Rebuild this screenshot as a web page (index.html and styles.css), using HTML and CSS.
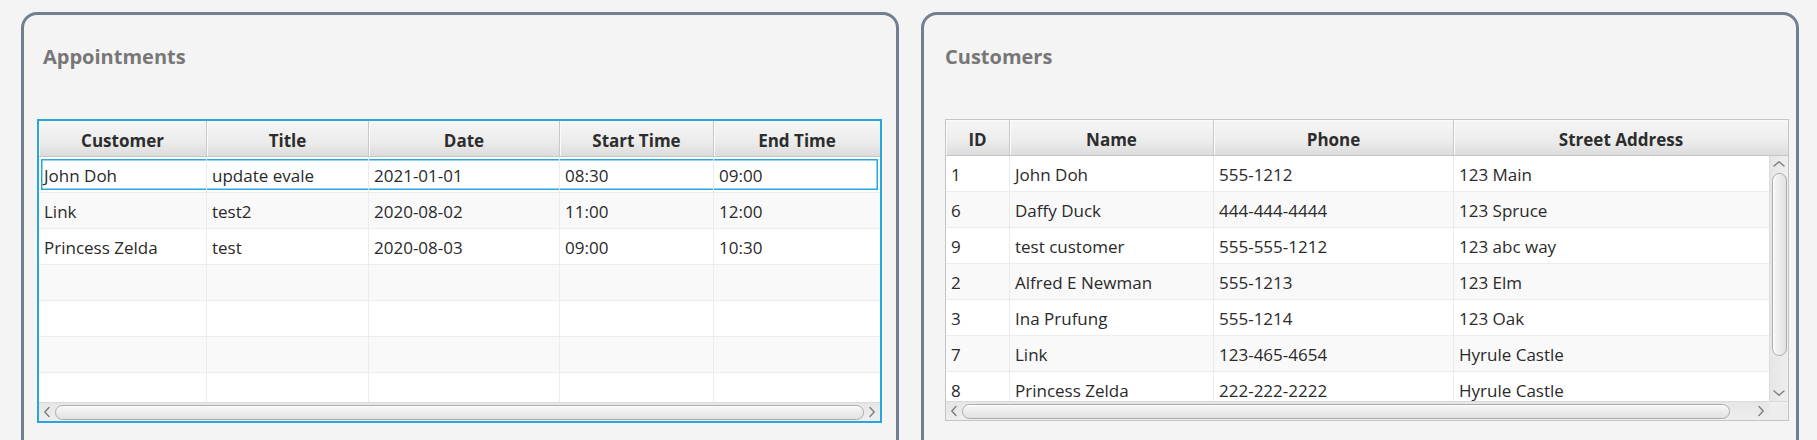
FILE: index.html
```html
<!DOCTYPE html>
<html>
<head>
<meta charset="utf-8">
<link rel="stylesheet" href="styles.css">
</head>
<body>
<div class="screen">
  <section class="panel panel-appts">
    <h2 class="panel-title">Appointments</h2>
    <div class="table table-focused">
      <div class="thead">
        <div class="th w168">Customer</div>
        <div class="th w162">Title</div>
        <div class="th w191">Date</div>
        <div class="th w154">Start Time</div>
        <div class="th grow last">End Time</div>
      </div>
      <div class="tbody-wrap">
        <div class="tbody">
          <div class="tr focus">
            <div class="td w168">John Doh</div>
            <div class="td w162">update evale</div>
            <div class="td w191">2021-01-01</div>
            <div class="td w154">08:30</div>
            <div class="td grow last">09:00</div>
          </div>
          <div class="tr">
            <div class="td w168">Link</div>
            <div class="td w162">test2</div>
            <div class="td w191">2020-08-02</div>
            <div class="td w154">11:00</div>
            <div class="td grow last">12:00</div>
          </div>
          <div class="tr">
            <div class="td w168">Princess Zelda</div>
            <div class="td w162">test</div>
            <div class="td w191">2020-08-03</div>
            <div class="td w154">09:00</div>
            <div class="td grow last">10:30</div>
          </div>
          <div class="tr">
            <div class="td w168"></div><div class="td w162"></div><div class="td w191"></div><div class="td w154"></div><div class="td grow last"></div>
          </div>
          <div class="tr">
            <div class="td w168"></div><div class="td w162"></div><div class="td w191"></div><div class="td w154"></div><div class="td grow last"></div>
          </div>
          <div class="tr">
            <div class="td w168"></div><div class="td w162"></div><div class="td w191"></div><div class="td w154"></div><div class="td grow last"></div>
          </div>
          <div class="tr">
            <div class="td w168"></div><div class="td w162"></div><div class="td w191"></div><div class="td w154"></div><div class="td grow last"></div>
          </div>
        </div>
      </div>
      <div class="hbar">
        <div class="arrow"><svg width="8" height="12" viewBox="0 0 8 12"><polyline points="6,1.5 1.8,6 6,10.5" class="chev"/></svg></div>
        <div class="htrack"><div class="hthumb" style="width:100%"></div></div>
        <div class="arrow"><svg width="8" height="12" viewBox="0 0 8 12"><polyline points="2,1.5 6.2,6 2,10.5" class="chev"/></svg></div>
      </div>
    </div>
  </section>

  <section class="panel panel-cust">
    <h2 class="panel-title">Customers</h2>
    <div class="table">
      <div class="thead">
        <div class="th w64">ID</div>
        <div class="th w204">Name</div>
        <div class="th w240">Phone</div>
        <div class="th grow last">Street Address</div>
      </div>
      <div class="body-row">
        <div class="tbody-wrap">
          <div class="tbody">
            <div class="tr"><div class="td w64">1</div><div class="td w204">John Doh</div><div class="td w240">555-1212</div><div class="td grow last">123 Main</div></div>
            <div class="tr"><div class="td w64">6</div><div class="td w204">Daffy Duck</div><div class="td w240">444-444-4444</div><div class="td grow last">123 Spruce</div></div>
            <div class="tr"><div class="td w64">9</div><div class="td w204">test customer</div><div class="td w240">555-555-1212</div><div class="td grow last">123 abc way</div></div>
            <div class="tr"><div class="td w64">2</div><div class="td w204">Alfred E Newman</div><div class="td w240">555-1213</div><div class="td grow last">123 Elm</div></div>
            <div class="tr"><div class="td w64">3</div><div class="td w204">Ina Prufung</div><div class="td w240">555-1214</div><div class="td grow last">123 Oak</div></div>
            <div class="tr"><div class="td w64">7</div><div class="td w204">Link</div><div class="td w240">123-465-4654</div><div class="td grow last">Hyrule Castle</div></div>
            <div class="tr"><div class="td w64">8</div><div class="td w204">Princess Zelda</div><div class="td w240">222-222-2222</div><div class="td grow last">Hyrule Castle</div></div>
          </div>
        </div>
        <div class="vbar">
          <div class="varrow"><svg width="12" height="8" viewBox="0 0 12 8"><polyline points="1,6 6,1.8 11,6" class="chev"/></svg></div>
          <div class="vtrack"><div class="vthumb" style="height:86%"></div></div>
          <div class="varrow"><svg width="12" height="8" viewBox="0 0 12 8"><polyline points="1,2 6,6.2 11,2" class="chev"/></svg></div>
        </div>
      </div>
      <div class="hbar">
        <div class="arrow"><svg width="8" height="12" viewBox="0 0 8 12"><polyline points="6,1.5 1.8,6 6,10.5" class="chev"/></svg></div>
        <div class="htrack"><div class="hthumb" style="width:97.3%"></div></div>
        <div class="arrow"><svg width="8" height="12" viewBox="0 0 8 12"><polyline points="2,1.5 6.2,6 2,10.5" class="chev"/></svg></div>
        <div class="corner"></div>
      </div>
    </div>
  </section>
</div>
</body>
</html>
```

FILE: styles.css
```css
html, body {
  margin: 0;
  padding: 0;
  overflow: hidden;
  height: 440px;
  background: #f4f4f4;
}

.screen {
  display: flex;
  gap: 22px;
  padding: 12px 0 0 21px;
  font-family: "Open Sans", "Noto Sans", "Liberation Sans", sans-serif;
  color: #2e2e2e;
}

.panel {
  box-sizing: border-box;
  width: 878px;
  height: 470px;
  border: 3px solid #708090;
  border-radius: 16px;
  background: #f4f4f4;
  padding-top: 29px;
  flex: none;
}

.panel-appts { padding-left: 13px; }
.panel-cust { padding-left: 21px; }

.panel-title {
  margin: 0 0 49px 0;
  font-size: 20px;
  line-height: 26px;
  font-weight: 700;
  color: #777777;
}
.panel-appts .panel-title { padding-left: 6px; }
.panel-cust .panel-title { padding-left: 0; }
.panel-cust .table { margin-top: 1px; }

.table {
  box-sizing: border-box;
  width: 844px;
  border: 1px solid #c4c4c4;
  background: #ffffff;
  display: flex;
  flex-direction: column;
}
.table-focused {
  width: 845px;
  border: 2px solid #27a6dc;
}

.thead {
  display: flex;
  height: 36px;
  box-sizing: border-box;
  border-bottom: 1px solid #c6c6c6;
  background: linear-gradient(to bottom, #f6f6f6 0%, #ececec 60%, #dcdcdc 100%);
}
.th {
  box-sizing: border-box;
  border-right: 1px solid #c9c9c9;
  box-shadow: inset 1px 1px 0 #fbfbfb;
  font-size: 17px;
  font-weight: 700;
  line-height: 33px;
  padding-top: 3px;
  text-align: center;
  color: #2d2d2d;
  white-space: nowrap;
  overflow: hidden;
}
.th.last { border-right: none; }

.w168 { width: 168px; flex: none; }
.w162 { width: 162px; flex: none; }
.w191 { width: 191px; flex: none; }
.w154 { width: 154px; flex: none; }
.w64 { width: 64px; flex: none; }
.w204 { width: 204px; flex: none; }
.w240 { width: 240px; flex: none; }
.grow { flex: 1; min-width: 0; }

.body-row {
  display: flex;
  height: 245px;
}
.body-row .tbody-wrap { flex: 1; min-width: 0; }

.tbody-wrap {
  height: 245px;
  overflow: hidden;
}

.tr {
  display: flex;
  height: 36px;
  box-sizing: border-box;
  border-bottom: 1px solid #ececec;
  background: #ffffff;
}
.tr:nth-child(even) { background: #f9f9f9; }
.tr.focus {
  box-shadow: inset 0 0 0 2px #ffffff, inset 0 0 0 3.5px #2aa8de;
}

.td {
  box-sizing: border-box;
  border-right: 1px solid #ebebeb;
  font-size: 17px;
  line-height: 32px;
  padding-top: 3px;
  padding-left: 5px;
  white-space: nowrap;
  overflow: hidden;
  color: #2a2a2a;
}
.td.last { border-right: none; }

.hbar {
  display: flex;
  height: 19px;
  box-sizing: border-box;
  border-top: 1px solid #dadada;
  background: linear-gradient(to bottom, #e6e6e6, #eeeeee);
  align-items: center;
}
.arrow {
  width: 16px;
  flex: none;
  display: flex;
  justify-content: center;
  align-items: center;
  height: 100%;
}
.htrack {
  flex: 1;
  display: flex;
  align-items: center;
  height: 100%;
}
.hthumb {
  box-sizing: border-box;
  height: 15px;
  border: 1px solid #ababab;
  border-radius: 8px;
  background: linear-gradient(to bottom, #f7f7f7, #e2e2e2);
  box-shadow: inset 0 1px 0 #ffffff;
}
.corner {
  width: 19px;
  flex: none;
  height: 100%;
  background: #ededed;
}
.panel-cust .htrack { margin-right: 2px; }

.vbar {
  width: 19px;
  flex: none;
  display: flex;
  flex-direction: column;
  align-items: center;
  box-sizing: border-box;
  border-left: 1px solid #dcdcdc;
  background: linear-gradient(to right, #e6e6e6, #eeeeee);
}
.varrow {
  height: 16px;
  flex: none;
  display: flex;
  justify-content: center;
  align-items: center;
  width: 100%;
}
.vtrack {
  flex: 1;
  width: 100%;
  display: flex;
  justify-content: center;
}
.vthumb {
  box-sizing: border-box;
  width: 15px;
  margin-top: 1px;
  border: 1px solid #ababab;
  border-radius: 8px;
  background: linear-gradient(to right, #f7f7f7, #e2e2e2);
  box-shadow: inset 1px 0 0 #ffffff;
}

.chev {
  fill: none;
  stroke: #7d7d7d;
  stroke-width: 1.4;
  stroke-linecap: round;
  stroke-linejoin: round;
}
```
